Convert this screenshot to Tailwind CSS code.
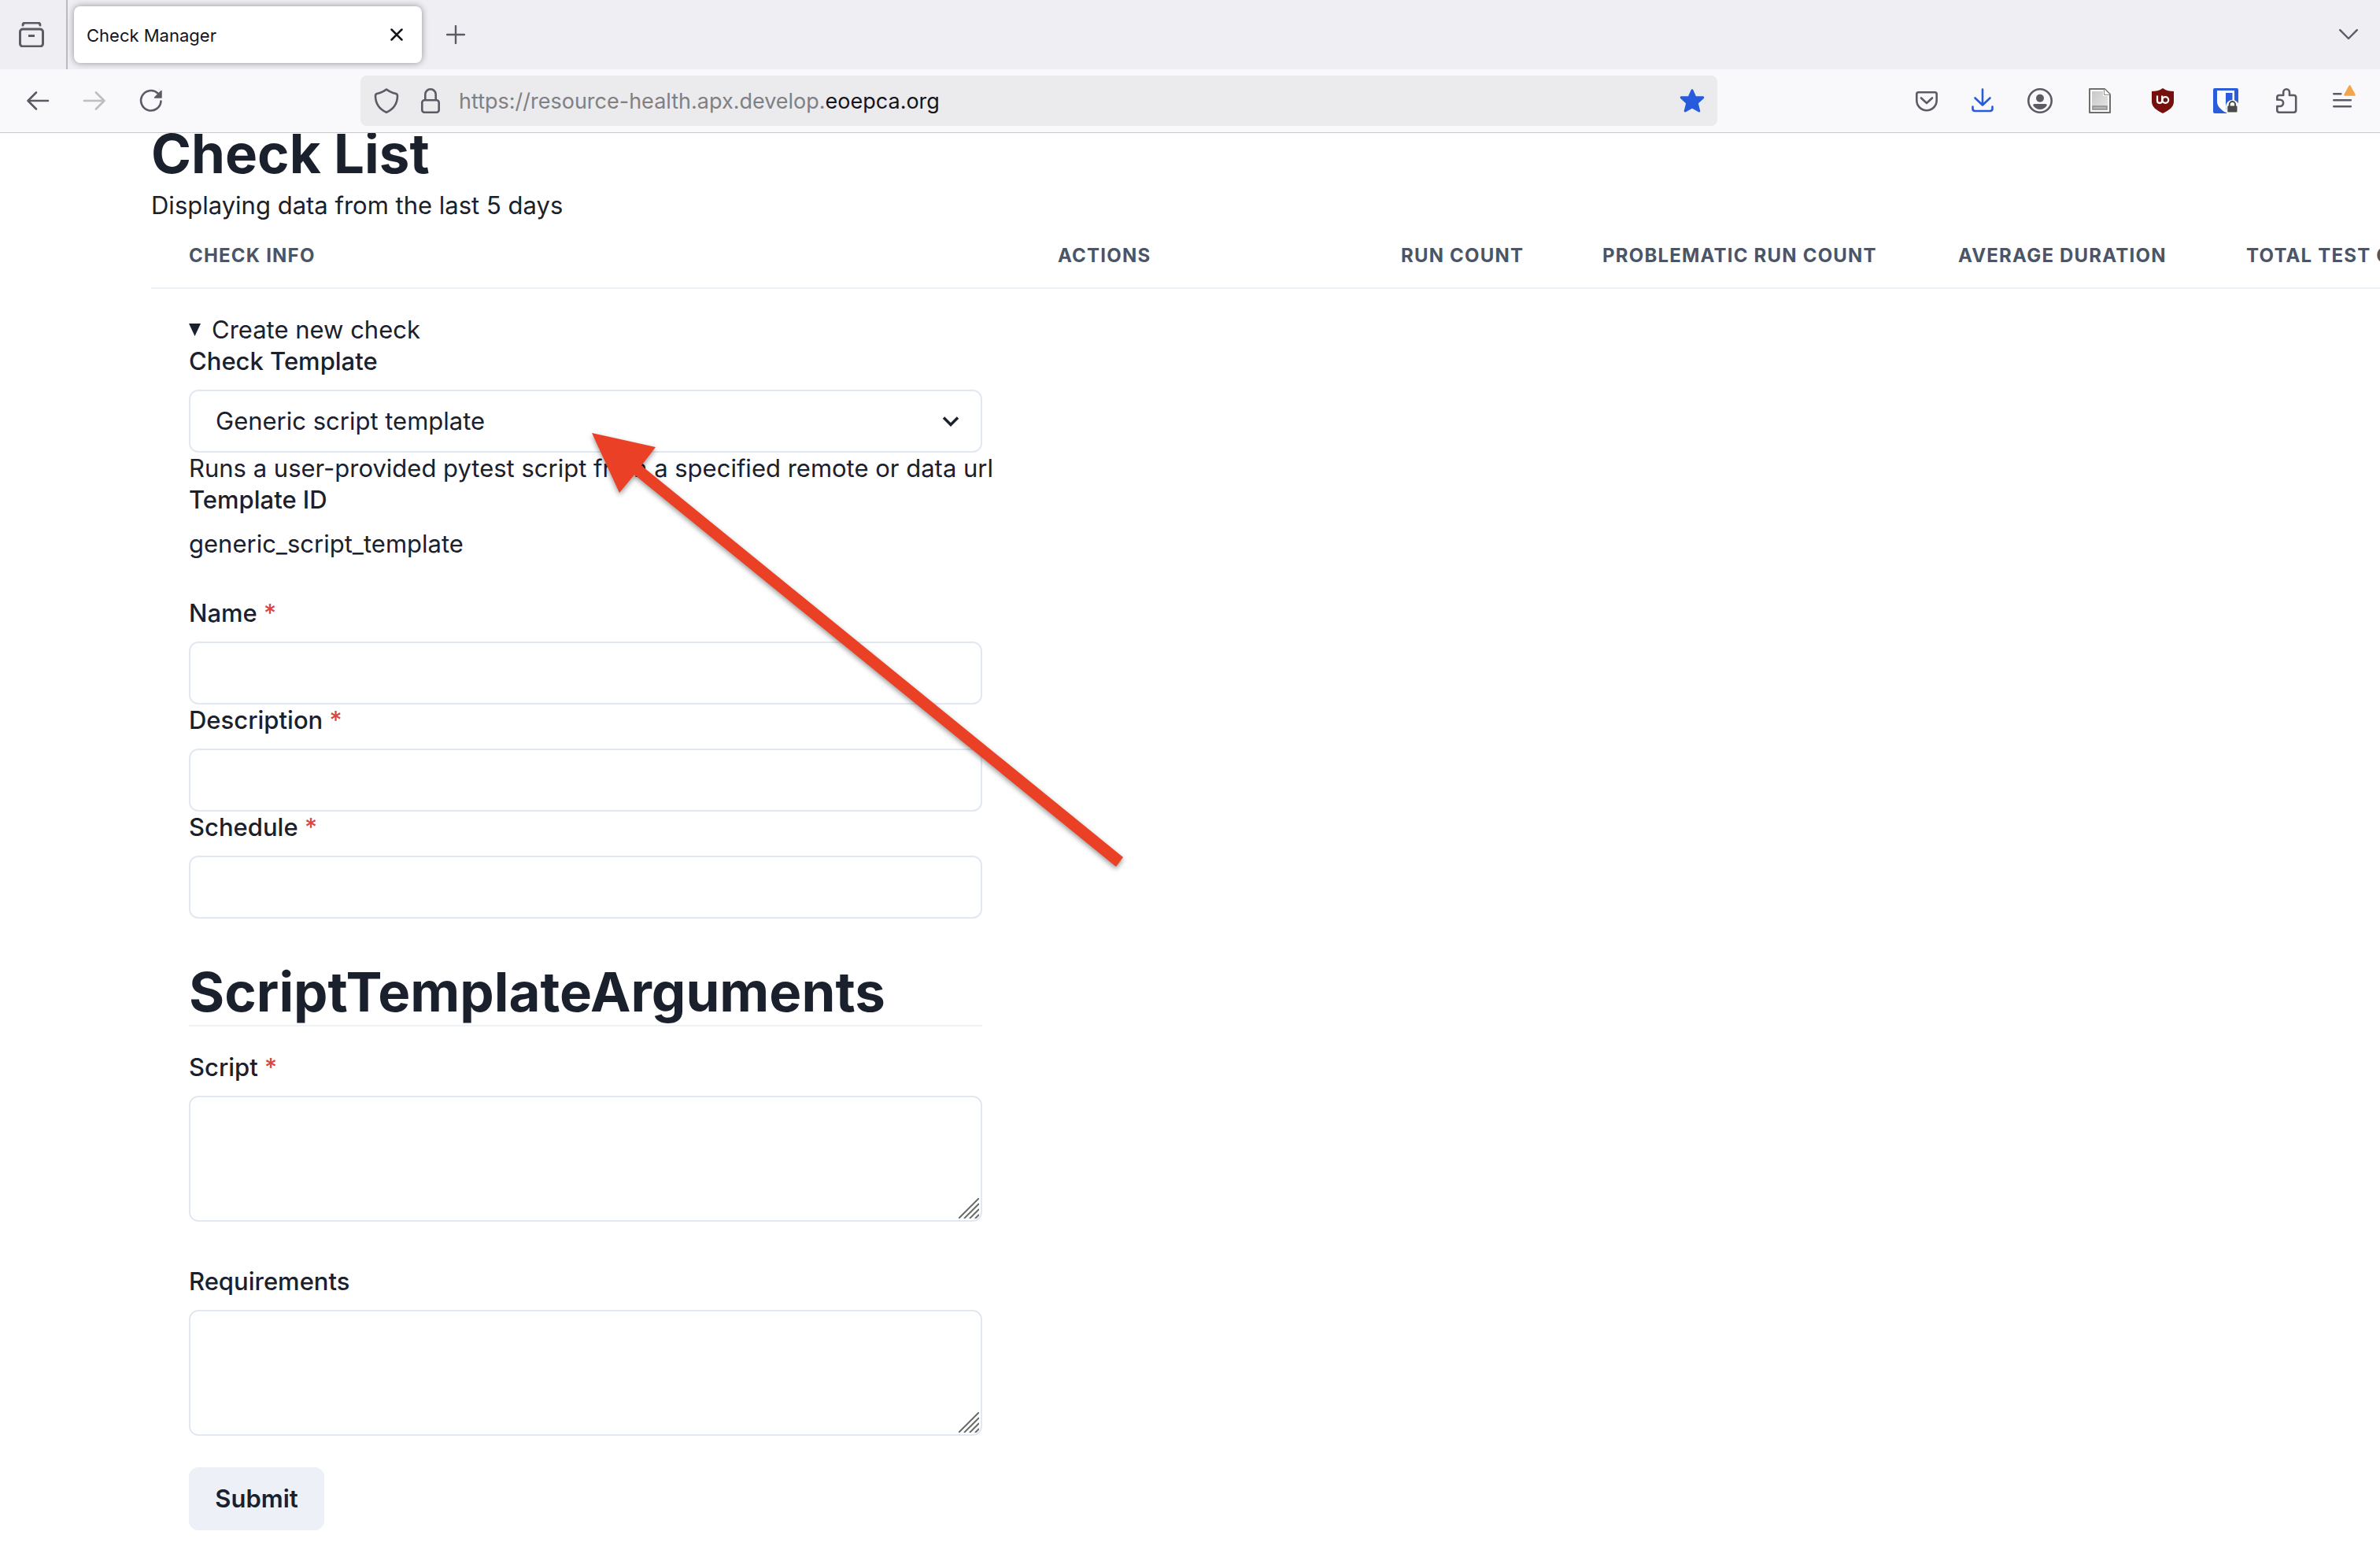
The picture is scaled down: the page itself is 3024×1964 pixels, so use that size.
<!DOCTYPE html>
<html lang="en">
<head>
<meta charset="utf-8">
<title>Check Manager</title>
<script src="https://cdn.jsdelivr.net/npm/@tailwindcss/browser@4"></script>
</head>
<body class="flex h-screen flex-col overflow-hidden bg-white font-['Inter',sans-serif] text-[31px] leading-10 text-[#1a202c]">

<!-- Tab strip -->
<header class="relative z-10 shrink-0 text-[#5b5b66]">
  <div class="flex h-[88px] items-center bg-[#efeef3]">
    <button type="button" aria-label="Recent browsing" class="flex h-full w-[86px] items-center border-r-2 border-[#bbbac1] pl-6">
      <svg class="size-8" viewBox="0 0 32 32" fill="none" stroke="currentColor" stroke-width="3" stroke-linecap="round"><path d="M5 4c0-2 1-3 3-3h16c2 0 3 1 3 3"/><rect x="1.500" y="9" width="29" height="22" rx="3.500"/><path d="M13.500 17.500h5" stroke-linecap="square"/></svg>
    </button>
    <div class="ml-2 flex h-[72px] w-[442px] items-center justify-between rounded-lg bg-white pr-6 pl-4 text-[22px] leading-8 text-[#15141a] shadow-[0_0_8px_rgba(0,0,0,0.4)]">
      <span class="pt-0.5">Check Manager</span>
      <button type="button" aria-label="Close tab"><svg class="size-4" viewBox="0 0 16 16" fill="none" stroke="currentColor" stroke-width="2.500" stroke-linecap="round"><path d="M1.500 1.500l13 13M14.500 1.500l-13 13"/></svg></button>
    </div>
    <button type="button" aria-label="New tab" class="ml-[31px]"><svg class="size-6" viewBox="0 0 24 24" fill="none" stroke="currentColor" stroke-width="2.400" stroke-linecap="round"><path d="M12 1v22M1 12h22"/></svg></button>
    <button type="button" aria-label="List all tabs" class="mr-7 ml-auto"><svg class="size-6" viewBox="0 0 24 24" fill="none" stroke="currentColor" stroke-width="2.400" stroke-linecap="round" stroke-linejoin="round"><path d="M1.200 6.200L12 17L22.800 6.200"/></svg></button>
  </div>

  <!-- Navigation bar -->
  <nav class="flex h-[81px] items-center border-b border-[#c9c9cc] bg-[#f9f9fb] px-3" aria-label="Browser navigation">
    <button type="button" aria-label="Back" class="flex w-[72px] justify-center"><svg class="size-8" viewBox="0 0 32 32" fill="none" stroke="currentColor" stroke-width="2.600" stroke-linecap="round" stroke-linejoin="round"><path d="M29 16H3.500M14 5.500L3.500 16L14 26.500"/></svg></button>
    <button type="button" aria-label="Forward" class="flex w-[72px] justify-center text-[#bdbdc2]"><svg class="size-8" viewBox="0 0 32 32" fill="none" stroke="currentColor" stroke-width="2.600" stroke-linecap="round" stroke-linejoin="round"><path d="M3 16h25.500M18 5.500L28.500 16L18 26.500"/></svg></button>
    <button type="button" aria-label="Reload" class="flex w-[72px] justify-center"><svg class="size-8" viewBox="0 0 32 32" fill="none" stroke="currentColor" stroke-width="2.600" stroke-linecap="round"><path d="M28.500 16.500A12.700 12.700 0 1 1 24.500 6.500"/><path d="M29 3.500v8.500h-8.500z" fill="currentColor" stroke-width="1.500" stroke-linejoin="round"/></svg></button>
    <div class="mx-[230px] flex h-16 min-w-0 flex-1 items-center rounded-lg bg-[#ebebed] pr-4 pl-[17px]">
      <svg class="size-8 shrink-0" viewBox="0 0 32 32" fill="none" stroke="currentColor" stroke-width="2.600" stroke-linejoin="round"><path d="M16 1.500C19 4 24 6 28 7c1.500.5 2 1 2 2.500C30 18 26.500 26 16 30.700C5.500 26 2 18 2 9.500C2 8 2.500 7.500 4 7C8 6 13 4 16 1.500z"/></svg>
      <svg class="ml-6 size-8 shrink-0" viewBox="0 0 32 32" fill="none" stroke="currentColor" stroke-width="2.600"><rect x="5.300" y="15.300" width="21.400" height="15.400" rx="3"/><path d="M9.300 15V8a6.700 6.700 0 0 1 13.400 0v7"/></svg>
      <div role="textbox" aria-label="Address" class="ml-5 flex-1 truncate pt-0.5 text-[27px] leading-10 text-[#808084]">https://resource-health.apx.develop.<span class="text-[#15141a]">eoepca.org</span></div>
      <button type="button" aria-label="Edit bookmark" class="text-[#265cdb]"><svg class="size-8" viewBox="0 0 32 32" fill="currentColor" stroke="currentColor" stroke-width="3" stroke-linejoin="round"><path d="M16 2.800l3.900 8.700 9.900.3-7.600 7 2.600 10.200L16 24l-8.800 5 2.600-10.200-7.600-7 9.900-.3z"/></svg></button>
    </div>
    <button type="button" aria-label="Save to Pocket" class="flex w-[72px] justify-center"><svg class="size-8" viewBox="0 0 32 32" fill="none" stroke="currentColor" stroke-width="2.600" stroke-linecap="round" stroke-linejoin="round"><path d="M5.500 5.300h21c1.500 0 2.200.8 2.200 2.200V15.500a12.700 12.700 0 0 1-25.400 0V7.500c0-1.400.7-2.200 2.200-2.200z"/><path d="M9 12.500l7 6.500 7-6.500"/></svg></button>
    <button type="button" aria-label="Downloads" class="flex w-[72px] justify-center text-[#265cdb]"><svg class="size-8" viewBox="0 0 32 32" fill="none" stroke="currentColor" stroke-width="2.600" stroke-linecap="round" stroke-linejoin="round"><path d="M15 1.500V21M5.500 12.500L15 21.500L24.500 12.500M2.500 23.500v2.500c0 2 1 3 3 3h19c2 0 3-1 3-3v-2.500"/></svg></button>
    <button type="button" aria-label="Account" class="flex w-[72px] justify-center"><svg class="size-8" viewBox="0 0 32 32" fill="currentColor"><circle cx="16" cy="16" r="14.700" fill="none" stroke="currentColor" stroke-width="2.600"/><circle cx="16" cy="12.700" r="5"/><path d="M9 20h14c1.500 0 2.200 1 1.500 2.300C22.800 25.300 19.500 27 16 27s-6.800-1.700-8.500-4.700C6.800 21 7.500 20 9 20z"/></svg></button>
    <button type="button" aria-label="Page viewer" class="flex w-20 justify-center"><svg class="size-8" viewBox="0 0 32 32"><defs><linearGradient id="sheet" x1="0" y1="0" x2="1" y2="1"><stop offset="0" stop-color="#c8c8c8"/><stop offset="1" stop-color="#e6e6e6"/></linearGradient></defs><path d="M3 1h19l7 7v23H3z" fill="#fff" stroke="#6e6e6a" stroke-width="2" stroke-linejoin="round"/><path d="M6 4h14v6h6v18H6z" fill="url(#sheet)"/><path d="M21.500 1v7.500H29" fill="#fff" stroke="#8a8a86" stroke-width="1"/><rect x="7" y="23" width="18" height="4" fill="#b5b5b5" stroke="#8f8f8f" stroke-width="1.500"/></svg></button>
    <button type="button" aria-label="uBlock Origin" class="flex w-20 justify-center"><svg class="size-8" viewBox="0 0 32 32"><path d="M16 0c4 3 9 4 14 4v13c0 7-6 11-14 15C8 28 2 24 2 17V4c5 0 10-1 14-4z" fill="#75100c"/><path d="M9 9.500v6.500c0 2 1.200 2.800 3 2.800s3.200-.8 3.200-2.800V9.500" fill="none" stroke="#fff" stroke-width="2.200"/><circle cx="19.300" cy="15" r="3.900" fill="none" stroke="#fff" stroke-width="2.200"/></svg></button>
    <button type="button" aria-label="Bitwarden" class="flex w-20 justify-center"><svg class="size-8" viewBox="0 0 32 32"><rect width="32" height="32" rx="2" fill="#2b5cd9"/><path d="M5 3h22v14c0 6-5 10.500-11 14C10 27.500 5 23 5 17z" fill="#fff"/><path d="M16 6h8.500v11c0 4-4 7-8.500 10z" fill="#2b5cd9"/><circle cx="24.500" cy="23.500" r="8.500" fill="#f9f9fb"/><path d="M17 25h15v6a1 1 0 0 1-1 1H17z" fill="#f9f9fb"/><path d="M20.700 23v-2.200a3.700 3.700 0 0 1 7.400 0V23" fill="none" stroke="#4a4a4a" stroke-width="2"/><rect x="18.300" y="22.500" width="12.200" height="8" rx="1" fill="#4a4a4a"/></svg></button>
    <button type="button" aria-label="Extensions" class="flex w-[72px] justify-center"><svg class="size-8" viewBox="0 0 32 32" fill="none" stroke="currentColor" stroke-width="2.600" stroke-linejoin="round"><path d="M13.200 9V5.200a3.900 3.900 0 0 1 7.800 0V9h5.500c1.500 0 2.700 1 2.700 2.500V28c0 1.500-1.200 2.700-2.700 2.700H8c-1.500 0-2.700-1.200-2.700-2.700v-5h3.700a4.100 4.100 0 0 0 0-8.200H5.300v-3.300C5.300 10 6.500 9 8 9z"/></svg></button>
    <button type="button" aria-label="Open application menu" class="flex w-[72px] justify-center"><svg class="h-10 w-9 overflow-visible" viewBox="0 0 36 40" fill="none" stroke="currentColor" stroke-width="2.600" stroke-linecap="round"><path d="M7.300 11.300h9M7.300 19.300h21.500M7.300 27.300h21.500"/><path d="M27.500 1.500l6 11h-12z" fill="#f2a54a" stroke="#f2a54a" stroke-linejoin="round"/></svg></button>
  </nav>
</header>

<!-- Page, scrolled slightly under the toolbar -->
<main class="-mt-4 min-h-0 flex-1 overflow-hidden pl-48">
  <h1 class="mb-1 text-[69px] leading-[84px] font-bold">Check List</h1>
  <p>Displaying data from the last 5 days</p>
  <table class="mt-1 w-[3200px] table-fixed text-left">
    <colgroup><col class="w-[1104px]"><col class="w-[436px]"><col class="w-[256px]"><col class="w-[452px]"><col class="w-[366px]"><col></colgroup>
    <thead class="border-b-2 border-[#edf2f7] text-[24px] leading-8 tracking-wider whitespace-nowrap text-[#4a5568] uppercase">
      <tr>
        <th scope="col" class="px-12 py-6 font-bold">Check info</th>
        <th scope="col" class="px-12 py-6 font-bold">Actions</th>
        <th scope="col" class="px-12 py-6 font-bold">Run count</th>
        <th scope="col" class="px-12 py-6 font-bold">Problematic run count</th>
        <th scope="col" class="px-12 py-6 font-bold">Average duration</th>
        <th scope="col" class="px-12 py-6 font-bold">Total test count</th>
      </tr>
    </thead>
    <tbody>
      <tr>
        <td class="px-12 py-8">
          <details open>
            <summary class="flex list-none items-center gap-[14px]"><svg class="h-4 w-[15px]" viewBox="0 0 15 16" fill="currentColor"><path d="M0 0h15L7.500 16z"/></svg>Create new check</summary>
            <form>
              <label for="template" class="mb-4 block font-medium">Check Template</label>
              <div class="relative">
                <select id="template" class="h-20 w-full appearance-none rounded-xl border-2 border-[#e2e8f0] bg-white px-8"><option>Generic script template</option></select>
                <svg class="pointer-events-none absolute top-8 right-7 h-4 w-6" viewBox="0 0 24 16" fill="none" stroke="currentColor" stroke-width="3.500"><path d="M3 3.500l9 9 9-9"/></svg>
              </div>
              <p class="whitespace-nowrap">Runs a user-provided pytest script from a specified remote or data url</p>
              <p class="mb-4 font-medium">Template ID</p>
              <p class="mb-12">generic_script_template</p>

              <label for="name" class="mb-4 block font-medium">Name <span class="text-[#d9463f]">*</span></label>
              <input id="name" type="text" required class="block h-20 w-full rounded-xl border-2 border-[#e2e8f0] px-8">
              <label for="description" class="mb-4 block font-medium">Description <span class="text-[#d9463f]">*</span></label>
              <input id="description" type="text" required class="block h-20 w-full rounded-xl border-2 border-[#e2e8f0] px-8">
              <label for="schedule" class="mb-4 block font-medium">Schedule <span class="text-[#d9463f]">*</span></label>
              <input id="schedule" type="text" required class="block h-20 w-full rounded-xl border-2 border-[#e2e8f0] px-8">

              <h2 class="mt-[51px] mb-8 border-b-2 border-[#edf2f7] text-[69px] leading-[84px] font-bold">ScriptTemplateArguments</h2>

              <label for="script" class="mb-4 block font-medium">Script <span class="text-[#d9463f]">*</span></label>
              <div class="relative mb-14">
                <textarea id="script" required class="block h-40 w-full resize-none rounded-xl border-2 border-[#e2e8f0] px-8 py-4"></textarea>
                <svg class="pointer-events-none absolute right-1 bottom-1 size-[26px]" viewBox="0 0 26 26" stroke="#6b6b6b" stroke-width="2"><path d="M0 26L26 0M7 26L26 7M14 26L26 14M21 26l5-5"/></svg>
              </div>
              <label for="requirements" class="mb-4 block font-medium">Requirements</label>
              <div class="relative mb-10">
                <textarea id="requirements" class="block h-40 w-full resize-none rounded-xl border-2 border-[#e2e8f0] px-8 py-4"></textarea>
                <svg class="pointer-events-none absolute right-1 bottom-1 size-[26px]" viewBox="0 0 26 26" stroke="#6b6b6b" stroke-width="2"><path d="M0 26L26 0M7 26L26 7M14 26L26 14M21 26l5-5"/></svg>
              </div>
              <button type="submit" class="h-20 min-w-[172px] rounded-xl bg-[#edf0f6] px-8 font-semibold">Submit</button>
            </form>
          </details>
        </td>
        <td colspan="5"></td>
      </tr>
    </tbody>
  </table>
</main>

<!-- Arrow annotation pointing at the template drop-down -->
<svg class="pointer-events-none absolute top-[550px] left-[752px] z-20 h-[552px] w-[676px] overflow-visible drop-shadow-[0_3px_3px_rgba(0,0,0,0.4)]" viewBox="0 0 676 552" fill="#ea4025" aria-hidden="true"><path d="M0 0L81 18L63 41.500L675 539L666 551L54 53L35 76z"/></svg>
</body>
</html>
